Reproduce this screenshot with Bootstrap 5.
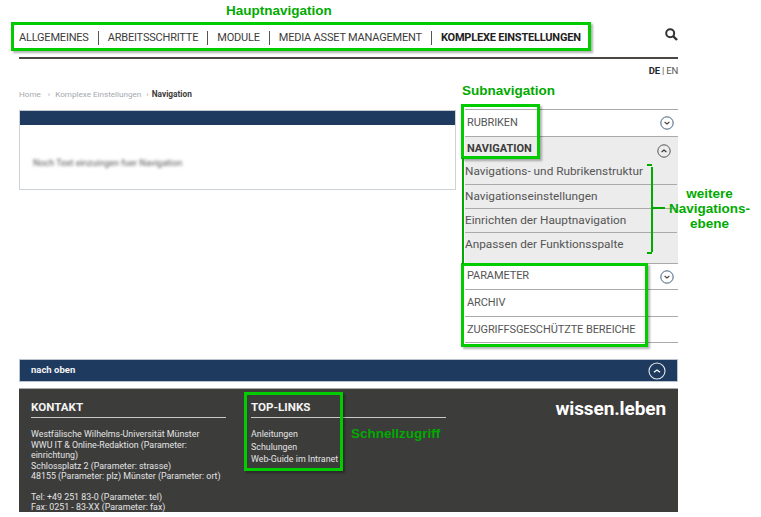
<!DOCTYPE html>
<html lang="de">
<head>
<meta charset="utf-8">
<title>Navigation</title>
<link href="https://cdn.jsdelivr.net/npm/bootstrap@5.3.0/dist/css/bootstrap.min.css" rel="stylesheet">
<style>
html,body{height:517px;overflow:hidden}
body{background:#fff;font-family:"Roboto","Liberation Sans",sans-serif;color:#3c3c3b;position:relative}
.shell{width:659px;margin-left:19px}
.topbar{height:57px;padding-top:31px}
.mainlink{font-size:11px;letter-spacing:-.2px;line-height:16px;color:#3c3c3b;text-decoration:none;padding-right:9px;margin-right:9px;border-right:1px solid #555;height:14px;display:flex;align-items:center;white-space:nowrap}
.mainlink.last{border:0;margin:0;padding:0;font-weight:700;color:#222}
.searchbtn{margin-top:-3px}
.rule{height:2px;background:#4a4744}
.langs{height:25px;font-size:9.5px;color:#555;padding-top:6px;line-height:11px;letter-spacing:-.2px}
.crumbs{height:25px;font-size:8.1px;line-height:12px;color:#a3a8ad;padding-top:4px;white-space:nowrap}
.crumbs b{color:#3c3c3b;font-size:8.3px}
.crumbs i{font-style:normal;margin:0 3px 0 3px}
.crumbs .homeitem{margin-right:4px}
.leftbox{width:437px;height:80px;border:1px solid #ccd2d6;border-top-color:#c3c9ce;margin-top:1px}
.leftbar{height:14px;background:#1e3a5f}
.blurtext{font-size:9px;color:#555;filter:blur(1.4px);margin:32px 0 0 13px;white-space:nowrap}
.sidecol{width:213px;margin-left:9px;border-top:1px solid #aaa}
.siderow{height:26.5px;border-bottom:1px solid #aaa;padding-left:2px;font-size:11px;letter-spacing:-.1px;color:#555;line-height:16px;white-space:nowrap}
.siderow.plain{padding-top:5px}
.siderow.raised{padding-top:4px}
.arrowdown{margin:1px 4px 0 0}
.raised .arrowdown{margin-top:2px}
.openblock{background:#ececec;height:127px;border-bottom:1px solid #aaa}
.openhead{height:25px;padding:4px 0 0 2px;font-size:11px;font-weight:700;color:#3c3c3b;line-height:16px}
.subitem{height:24px;border-bottom:1px solid #aaa;font-size:11.8px;color:#555;line-height:22px;white-space:nowrap;width:212px}
.subitem.first{height:23px;line-height:19px}
.subitem.end{border:0}
.toparrow{margin:3px 7px 0 0}
.backbar{height:23px;background:#1e3a5f;border:1px solid #b9c3cf;margin-top:16px;padding:0 11px;font-size:9.5px;font-weight:700;color:#f2f2f2}
.foot{height:124px;background:#3c3c3b;border-top:1px solid #aaa;margin-top:6px;color:#e4e4e4;font-size:8.85px;line-height:10.5px;overflow:hidden;position:relative}
.footcol{padding-top:10px}
.footcol.one{width:195px;margin-left:12px}
.footcol.two{width:195px;margin-left:25px}
.fhead{font-size:11.6px;font-weight:700;color:#f4f4f4;line-height:16px;height:19px;border-bottom:1px solid #c8c8c8;margin-bottom:10px}
.ftext{padding-top:1px}
.ftext p{margin:0}
.ftext .gap{height:10px}
.flinks a{display:block;color:#e4e4e4;text-decoration:none;height:12.5px;line-height:12px}
.brand{position:absolute;right:12px;top:8px;font-size:19px;font-weight:700;color:#fff;line-height:24px;letter-spacing:-.1px}
.note{position:absolute;color:#0a0;font-family:"Liberation Sans",sans-serif;font-weight:700;font-size:13.5px;line-height:15px;white-space:nowrap}
.mark-box{position:absolute;border:3px solid #0c0;box-shadow:2px 2px 2px rgba(0,0,0,.3)}
.mark-line{position:absolute;background:#0a0}
</style>
</head>
<body>
<div class="shell">
  <div class="topbar d-flex justify-content-between">
    <nav class="d-flex align-items-start">
      <a class="mainlink" href="#">ALLGEMEINES</a>
      <a class="mainlink" href="#">ARBEITSSCHRITTE</a>
      <a class="mainlink" href="#">MODULE</a>
      <a class="mainlink" href="#">MEDIA ASSET MANAGEMENT</a>
      <a class="mainlink last" href="#">KOMPLEXE EINSTELLUNGEN</a>
    </nav>
    <svg class="searchbtn" width="13" height="13" viewBox="0 0 13 13" aria-label="Suche"><circle cx="5.2" cy="5.2" r="4" fill="none" stroke="#333" stroke-width="2"/><path d="M8 8l4 4" stroke="#333" stroke-width="2.4"/></svg>
  </div>
  <div class="rule"></div>
  <div class="langs text-end"><b class="text-dark">DE</b> | EN</div>
  <div class="crumbs"><span class="homeitem">Home</span><i>›</i> Komplexe Einstellungen <i>›</i><b>Navigation</b></div>
  <div class="d-flex align-items-start">
    <div class="leftbox">
      <div class="leftbar"></div>
      <div class="blurtext">Noch Text einzuingen fuer Navigation</div>
    </div>
    <div class="sidecol">
      <div class="siderow plain d-flex justify-content-between"><span>RUBRIKEN</span>
        <svg width="14" height="14" viewBox="0 0 14 14" class="arrowdown"><circle cx="7" cy="7" r="6.2" fill="none" stroke="#44617f"/><path d="M4.6 6l2.4 2 2.4-2" fill="none" stroke="#444" stroke-width="1.1"/></svg>
      </div>
      <div class="openblock">
        <div class="openhead d-flex justify-content-between"><span>NAVIGATION</span>
          <svg width="14" height="14" viewBox="0 0 14 14" class="toparrow"><circle cx="7" cy="7" r="6.2" fill="none" stroke="#555"/><path d="M4.6 8l2.4-2 2.4 2" fill="none" stroke="#333" stroke-width="1.1"/></svg>
        </div>
        <div class="subitem first">Navigations- und Rubrikenstruktur</div>
        <div class="subitem">Navigationseinstellungen</div>
        <div class="subitem">Einrichten der Hauptnavigation</div>
        <div class="subitem end">Anpassen der Funktionsspalte</div>
      </div>
      <div class="siderow raised d-flex justify-content-between"><span>PARAMETER</span>
        <svg width="14" height="14" viewBox="0 0 14 14" class="arrowdown"><circle cx="7" cy="7" r="6.2" fill="none" stroke="#44617f"/><path d="M4.6 6l2.4 2 2.4-2" fill="none" stroke="#444" stroke-width="1.1"/></svg>
      </div>
      <div class="siderow plain">ARCHIV</div>
      <div class="siderow plain">ZUGRIFFSGESCHÜTZTE BEREICHE</div>
    </div>
  </div>
  <div class="backbar d-flex justify-content-between align-items-center">
    <span>nach oben</span>
    <svg width="18" height="18" viewBox="0 0 18 18"><circle cx="9" cy="9" r="8" fill="none" stroke="#e8e8e8" stroke-width="1.1"/><path d="M6 10.2l3-2.2 3 2.2" fill="none" stroke="#fff" stroke-width="1.4"/></svg>
  </div>
  <footer class="foot d-flex">
    <div class="footcol one">
      <div class="fhead">KONTAKT</div>
      <div class="ftext">
        <p>Westfälische Wilhelms-Universität Münster</p>
        <p>WWU IT &amp; Online-Redaktion (Parameter: einrichtung)</p>
        <p>Schlossplatz 2 (Parameter: strasse)</p>
        <p>48155 (Parameter: plz) Münster (Parameter: ort)</p>
        <div class="gap"></div>
        <p>Tel: +49 251 83-0 (Parameter: tel)</p>
        <p>Fax: 0251 - 83-XX (Parameter: fax)</p>
      </div>
    </div>
    <div class="footcol two">
      <div class="fhead">TOP-LINKS</div>
      <div class="flinks"><a href="#">Anleitungen</a><a href="#">Schulungen</a><a href="#">Web-Guide im Intranet</a></div>
    </div>
    <div class="brand">wissen.leben</div>
  </footer>
</div>

<div class="note" style="left:226px;top:3px">Hauptnavigation</div>
<div class="note" style="left:462px;top:83px">Subnavigation</div>
<div class="note text-center" style="left:669px;top:186px">weitere<br>Navigations-<br>ebene</div>
<div class="note" style="left:351px;top:426px">Schnellzugriff</div>
<div class="mark-box" style="left:11px;top:22px;width:580px;height:29px"></div>
<div class="mark-box" style="left:461px;top:104px;width:79px;height:55px"></div>
<div class="mark-box" style="left:461px;top:263px;width:187px;height:84px"></div>
<div class="mark-box" style="left:244px;top:392px;width:99px;height:79px"></div>
<div class="mark-line" style="left:462px;top:158px;width:2px;height:106px"></div>
<div class="mark-line" style="left:651px;top:167px;width:2px;height:85px"></div>
<div class="mark-line" style="left:653px;top:207px;width:12px;height:2px"></div>
<div class="mark-line" style="left:647px;top:164px;width:5px;height:2px"></div>
<div class="mark-line" style="left:647px;top:252px;width:5px;height:2px"></div>
<script src="https://cdn.jsdelivr.net/npm/bootstrap@5.3.0/dist/js/bootstrap.bundle.min.js"></script>
</body>
</html>
